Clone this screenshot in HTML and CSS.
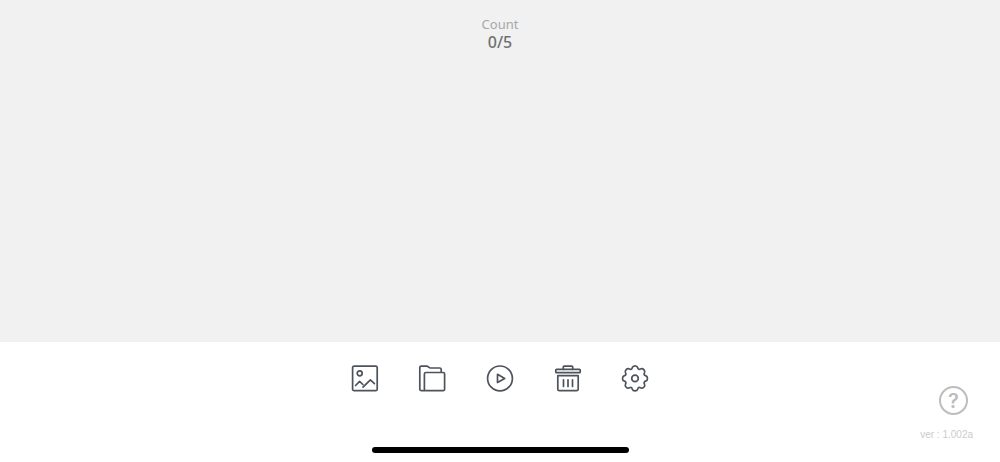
FILE: index.html
```html
<!DOCTYPE html>
<html lang="en">
<head>
    <meta charset="UTF-8">
    <meta name="viewport" content="width=device-width, initial-scale=1.0">
    <title>Count</title>
    <link rel="stylesheet" href="styles.css">
</head>
<body>
    <main class="stage">
        <p class="count-label">Count</p>
        <p class="count-value">0/5</p>
    </main>
    <footer class="panel">
        <nav class="toolbar">
            <button type="button" aria-label="Image">
                <svg viewBox="0 0 28 28">
                    <rect x="1.6" y="2.1" width="24.6" height="24.6" rx="1.5"/>
                    <circle cx="8.7" cy="9.3" r="2.5"/>
                    <path d="M4.6 21.5l4-4.2 3.3 3.2M12 23.2l7.4-7.4 4 3.9"/>
                </svg>
            </button>
            <button type="button" aria-label="Folder">
                <svg viewBox="0 0 28 28">
                    <path d="M6.4 26.7H3.3a1.5 1.5 0 0 1-1.5-1.5V3.6a1.5 1.5 0 0 1 1.5-1.5h5.4c1.6 0 2.2 1.9 3.8 1.9h9.2a1.5 1.5 0 0 1 1.5 1.5v2.7"/>
                    <rect x="6.4" y="8.5" width="20.2" height="18.2" rx="1.5"/>
                </svg>
            </button>
            <button type="button" aria-label="Play">
                <svg viewBox="0 0 28 28">
                    <circle cx="14" cy="14.4" r="12.4"/>
                    <path d="M11.5 10.3v8.2l7.2-4.1z"/>
                </svg>
            </button>
            <button type="button" aria-label="Delete">
                <svg viewBox="0 0 28 28">
                    <path d="M9.3 5.3V3.1a1 1 0 0 1 1-1h7.4a1 1 0 0 1 1 1v2.2"/>
                    <rect x="1.8" y="5.3" width="24.4" height="3.4" rx=".8"/>
                    <path d="M3.8 11.7h20.4v13.5a1.5 1.5 0 0 1-1.5 1.5H5.3a1.5 1.5 0 0 1-1.5-1.5z"/>
                    <path d="M9.5 15.8v6.7M14 15.8v6.7M18.5 15.8v6.7"/>
                </svg>
            </button>
            <button type="button" aria-label="Settings">
                <svg viewBox="0 0 28 28">
                    <path transform="translate(14 14.4)" d="M-2.82-10.53A3 3 0 0 1 2.82-10.53A1.6 1.6 0 0 0 5.45-9.44A3 3 0 0 1 9.44-5.45A1.6 1.6 0 0 0 10.53-2.82A3 3 0 0 1 10.53 2.82A1.6 1.6 0 0 0 9.44 5.45A3 3 0 0 1 5.45 9.44A1.6 1.6 0 0 0 2.82 10.53A3 3 0 0 1-2.82 10.53A1.6 1.6 0 0 0-5.45 9.44A3 3 0 0 1-9.44 5.45A1.6 1.6 0 0 0-10.53 2.82A3 3 0 0 1-10.53-2.82A1.6 1.6 0 0 0-9.44-5.45A3 3 0 0 1-5.45-9.44A1.6 1.6 0 0 0-2.82-10.53Z"/>
                    <circle cx="14" cy="14.4" r="3.3"/>
                </svg>
            </button>
        </nav>
        <div class="info">
            <button type="button" class="help" aria-label="Help">?</button>
            <p class="version">ver : 1.002a</p>
        </div>
        <div class="home-bar"></div>
    </footer>
</body>
</html>
```

FILE: styles.css
```css
* {
    margin: 0;
    padding: 0;
    box-sizing: border-box;
}

body {
    display: flex;
    flex-direction: column;
    min-height: 100vh;
    font-family: "Noto Sans", sans-serif;
    background-color: #fff;
}

.stage {
    flex: 1;
    padding-top: 15px;
    text-align: center;
    background-color: #f1f1f1;
}

.count-label {
    font-size: 13px;
    line-height: 18px;
    color: #a8a8a8;
}

.count-value {
    font-size: 16px;
    font-weight: 500;
    line-height: 18px;
    color: #707070;
}

.panel {
    display: grid;
    grid-template-columns: 1fr 338px 1fr;
    row-gap: 6px;
    padding-bottom: 9px;
}

.toolbar {
    grid-column: 2;
    display: grid;
    grid-template-columns: repeat(5, 1fr);
    align-items: start;
    justify-items: center;
    padding-top: 22px;
}

.toolbar button {
    width: 28px;
    height: 28px;
    border: none;
    background: none;
    cursor: pointer;
}

.toolbar svg {
    display: block;
    width: 28px;
    height: 28px;
    fill: none;
    stroke: #4d535d;
    stroke-width: 1.7;
    stroke-linecap: round;
    stroke-linejoin: round;
}

.info {
    display: flex;
    flex-direction: column;
    align-items: flex-end;
    gap: 14px;
    padding: 44px 27px 0 0;
}

.help {
    width: 29px;
    height: 29px;
    margin-right: 5px;
    border: 2px solid #bdbdbd;
    border-radius: 50%;
    background: none;
    font-family: Inter, sans-serif;
    font-size: 20px;
    font-weight: 600;
    line-height: 24px;
    color: #bdbdbd;
    cursor: pointer;
}

.version {
    font-family: "Liberation Sans", Arial, sans-serif;
    font-size: 10px;
    line-height: 12px;
    color: #ccc;
}

.home-bar {
    grid-column: 1 / -1;
    justify-self: center;
    width: 257px;
    height: 6px;
    border-radius: 3px;
    background-color: #000;
}
```
